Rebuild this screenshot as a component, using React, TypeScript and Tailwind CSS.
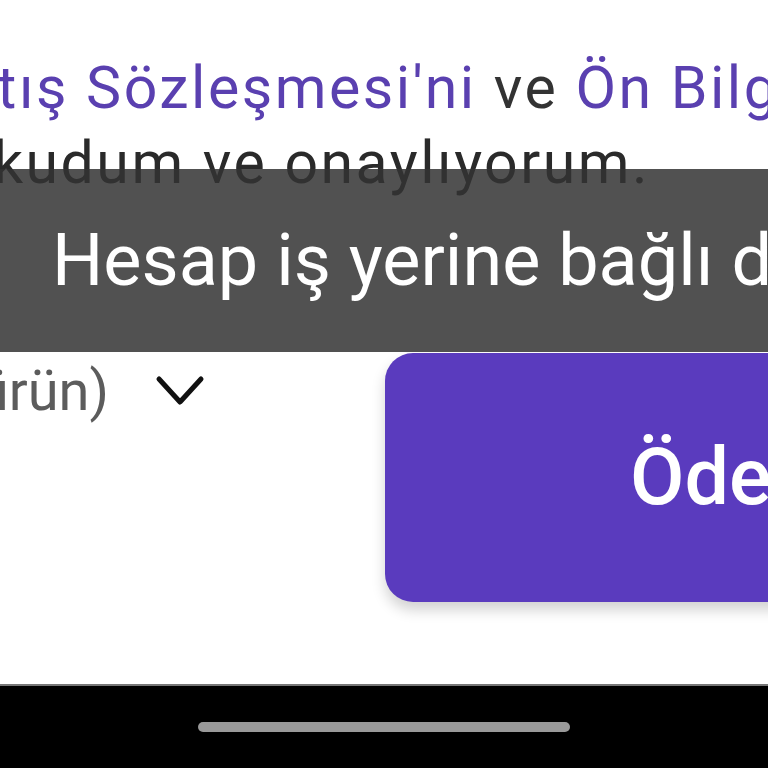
import React from "react";

const font = { fontFamily: "Roboto, 'Noto Sans', sans-serif" };

function Chevron() {
  return (
    <svg width="50" height="34" viewBox="0 0 50 34" fill="none" className="shrink-0">
      <polyline points="4,5 25,28 46,5" stroke="#111" strokeWidth="5" strokeLinecap="round" strokeLinejoin="round" />
    </svg>
  );
}

export default function App() {
  return (
    <div className="relative flex h-[768px] w-[768px] flex-col overflow-hidden bg-white" style={font}>
      {/* agreement text */}
      <div className="mt-[50px] overflow-hidden text-[59px] leading-[75px] tracking-[2.5px]">
        <p className="ml-[-75px] whitespace-nowrap">
          <span className="text-[#5a40b0]">Satış Sözleşmesi'ni</span>
          <span className="text-[#333]"> ve </span>
          <span className="text-[#5a40b0]">Ön Bilgilendirme Formu'nu</span>
        </p>
        <p className="ml-[-43px] whitespace-nowrap text-[#2a2a2a]">okudum ve onaylıyorum.</p>
      </div>

      {/* bottom row */}
      <div className="mt-[153px] flex items-start">
        <div className="flex w-[385px] shrink-0 justify-end overflow-hidden pr-[180px] pt-[6px]">
          <div className="flex shrink-0 items-center gap-[46px]">
            <span className="whitespace-nowrap text-[56px] leading-[64px] text-[#5c5c5c]">Özet (Birürün)</span>
            <Chevron />
          </div>
        </div>
        <button className="h-[249px] w-[760px] shrink-0 rounded-[28px] bg-[#5a3bbe] pl-[245px] text-left text-[79px] font-medium text-white shadow-[0_8px_14px_rgba(0,0,0,0.18)]">
          <span className="whitespace-nowrap">Ödemeye Geç</span>
        </button>
      </div>

      {/* system nav bar */}
      <div className="mt-auto flex h-[84px] items-center justify-center border-t-2 border-[#777] bg-black">
        <div className="h-[10px] w-[372px] rounded-full bg-[#999]" />
      </div>

      {/* toast */}
      <div className="absolute left-[-30px] top-[169px] flex h-[183px] w-[900px] items-center rounded-[24px] bg-[#333]/85 pl-[82px]">
        <span className="whitespace-nowrap text-[72px] text-white">Hesap iş yerine bağlı değil</span>
      </div>
    </div>
  );
}
